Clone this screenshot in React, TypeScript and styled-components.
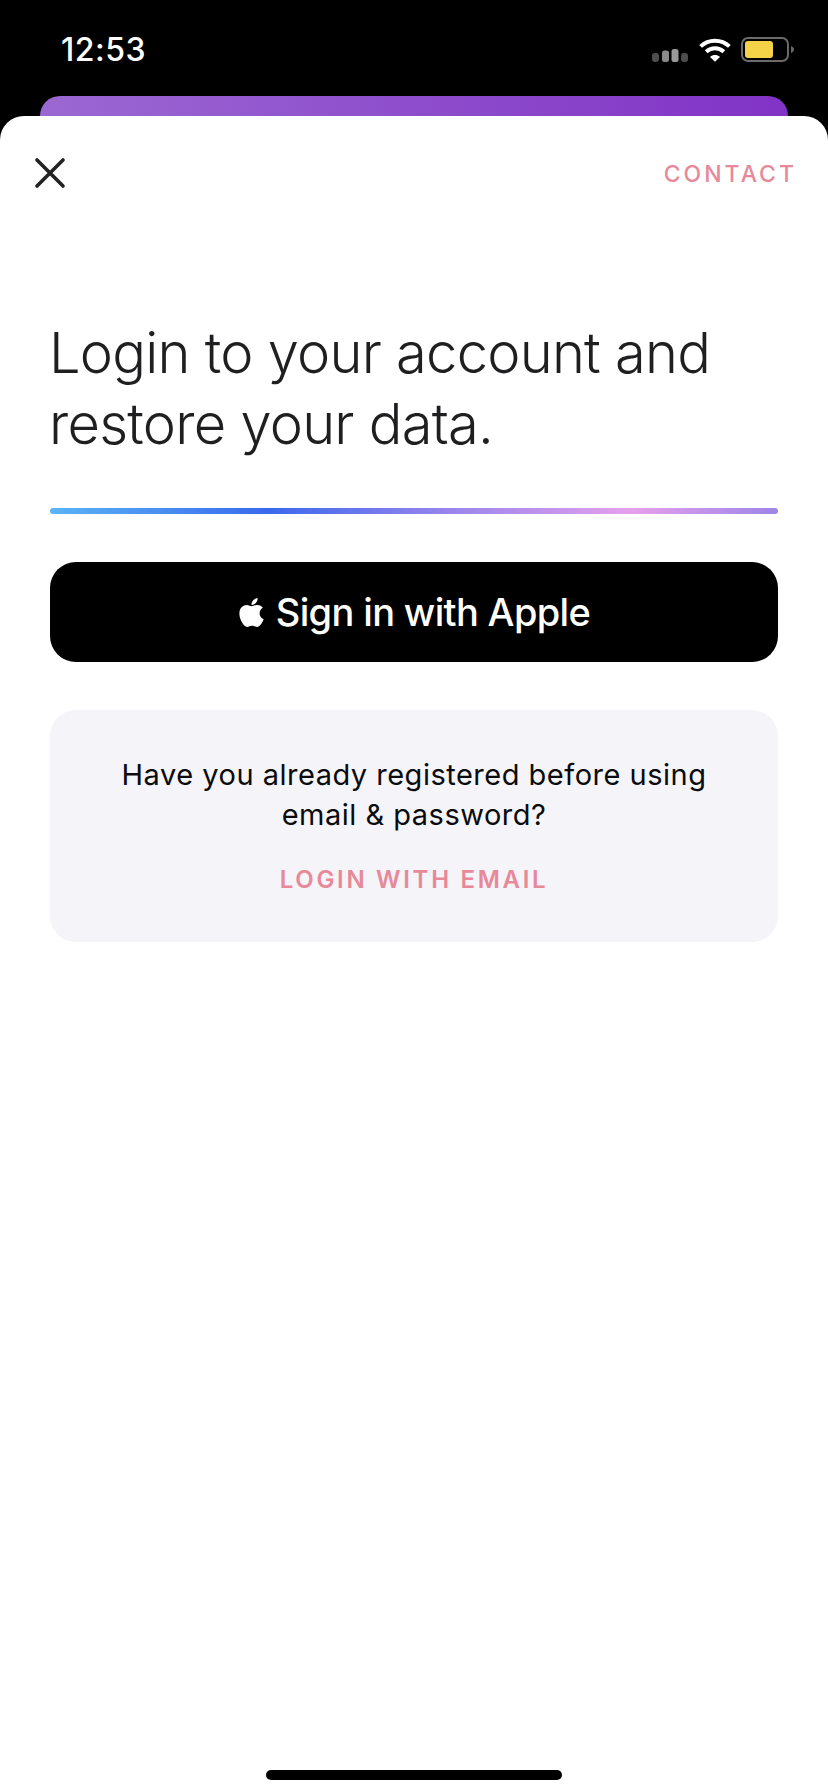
import React from "react";
import styled, { createGlobalStyle } from "styled-components";
import { FaApple } from "react-icons/fa";

const Global = createGlobalStyle`
  html, body { margin: 0; padding: 0; background: #000; }
  * { box-sizing: border-box; }
  body { font-family: Inter, "Liberation Sans", sans-serif; }
`;

const Page = styled.div`
  width: 828px;
  height: 1792px;
  background: #000;
  display: flex;
  flex-direction: column;
  overflow: hidden;
`;

const StatusBar = styled.header`
  height: 96px;
  flex: none;
  display: flex;
  justify-content: space-between;
  align-items: flex-start;
  padding: 30px 34px 0 61px;
`;

const Time = styled.span`
  color: #fff;
  font-size: 32px;
  line-height: 39px;
  font-weight: 500;
  letter-spacing: 0.5px;
`;

const StatusIcons = styled.div`
  display: flex;
  align-items: flex-end;
  margin-top: 7px;
  height: 25px;
`;

const BehindCard = styled.div`
  flex: none;
  height: 20px;
  margin: 0 40px;
  border-radius: 20px 20px 0 0;
  background: linear-gradient(90deg, #9b68d2 0%, #8133c6 100%);
`;

const Sheet = styled.main`
  flex: 1;
  background: #fff;
  border-radius: 24px 24px 0 0;
  display: flex;
  flex-direction: column;
  position: relative;
`;

const TopRow = styled.div`
  display: flex;
  justify-content: space-between;
  align-items: center;
  padding: 41px 34px 0 34px;
`;

const ContactLink = styled.span`
  color: #e8899a;
  font-size: 23px;
  line-height: 30px;
  font-weight: 450;
  letter-spacing: 3px;
  margin: 2px -3px 0 0;
`;

const Content = styled.div`
  padding: 129px 50px 0;
  display: flex;
  flex-direction: column;
`;

const Heading = styled.h1`
  margin: 0 0 0 -1px;
  color: #1f1f21;
  font-size: 56px;
  line-height: 71px;
  font-weight: 300;
  letter-spacing: -0.75px;
`;

const GradientRule = styled.div`
  height: 6px;
  margin-top: 48px;
  border-radius: 3px;
  background: linear-gradient(90deg, #5ab4f7 0%, #3a69ec 30%, #9a85ec 55%, #e6a0ec 80%, #9d85e8 100%);
`;

const AppleButton = styled.button`
  height: 100px;
  margin-top: 48px;
  border: 0;
  border-radius: 26px;
  background: #000;
  color: #fff;
  display: flex;
  align-items: center;
  justify-content: center;
  gap: 8px;
  font-family: inherit;
  font-size: 38px;
  font-weight: 500;
  letter-spacing: -0.65px;
  padding: 0 3px 0 0;
`;

const EmailCard = styled.section`
  height: 232px;
  margin-top: 48px;
  border-radius: 26px;
  background: #f4f4f9;
  padding: 45px 40px 0;
  display: flex;
  flex-direction: column;
  align-items: center;
`;

const Question = styled.p`
  margin: 0;
  color: #0b0b0d;
  text-align: center;
  font-size: 29px;
  line-height: 40px;
  letter-spacing: 0.5px;
`;

const EmailLink = styled.span`
  margin-top: 30px;
  color: #e8899a;
  font-size: 24px;
  line-height: 29px;
  font-weight: 600;
  letter-spacing: 2.7px;
`;

const HomeIndicator = styled.div`
  position: absolute;
  left: 266px;
  bottom: 12px;
  width: 296px;
  height: 10px;
  border-radius: 5px;
  background: #000;
`;

const CloseIcon = () => (
  <svg width="32" height="32" viewBox="0 0 32 32" fill="none" stroke="#222" strokeWidth="3.6" strokeLinecap="round">
    <path d="M3 3 L29 29 M29 3 L3 29" />
  </svg>
);

const Signal = () => (
  <svg width="36" height="13" viewBox="0 0 36 13" style={{ marginRight: 11 }}>
    <rect x="0" y="4" width="7" height="9" rx="3" fill="#4d4d4d" />
    <rect x="10" y="1.5" width="7" height="11.5" rx="2.5" fill="#8a8a8a" />
    <rect x="19.5" y="0" width="7" height="13" rx="2.5" fill="#9a9a9a" />
    <rect x="29" y="4" width="7" height="9" rx="3" fill="#4d4d4d" />
  </svg>
);

const Wifi = () => (
  <svg width="32" height="24" viewBox="0 0 32 24" fill="none" style={{ marginRight: 10 }}>
    <path d="M1.6 8.4 C9.6 0.8 22.4 0.8 30.4 8.4" stroke="#fff" strokeWidth="4" />
    <path d="M7.2 13.8 C12.2 9.2 19.8 9.2 24.8 13.8" stroke="#fff" strokeWidth="4" />
    <path d="M11 19 L16 23.8 L21 19 C18 16.4 14 16.4 11 19 Z" fill="#fff" />
  </svg>
);

const Battery = () => (
  <svg width="53" height="25" viewBox="0 0 53 25" fill="none">
    <rect x="1" y="1" width="46" height="23" rx="6" stroke="#6a6a6a" strokeWidth="2" />
    <rect x="4" y="4" width="28" height="17" rx="3" fill="#f5d348" />
    <path d="M50 9 C51.8 9.8 53 11 53 12.5 C53 14 51.8 15.2 50 16 Z" fill="#6a6a6a" />
  </svg>
);

export default function App() {
  return (
    <Page>
      <Global />
      <StatusBar>
        <Time>12:53</Time>
        <StatusIcons>
          <Signal />
          <Wifi />
          <Battery />
        </StatusIcons>
      </StatusBar>
      <BehindCard />
      <Sheet>
        <TopRow>
          <CloseIcon />
          <ContactLink>CONTACT</ContactLink>
        </TopRow>
        <Content>
          <Heading>
            Login to your account and
            <br />
            restore your data.
          </Heading>
          <GradientRule />
          <AppleButton>
            <FaApple size={33} />
            Sign in with Apple
          </AppleButton>
          <EmailCard>
            <Question>
              Have you already registered before using
              <br />
              email &amp; password?
            </Question>
            <EmailLink>LOGIN WITH EMAIL</EmailLink>
          </EmailCard>
        </Content>
        <HomeIndicator />
      </Sheet>
    </Page>
  );
}
